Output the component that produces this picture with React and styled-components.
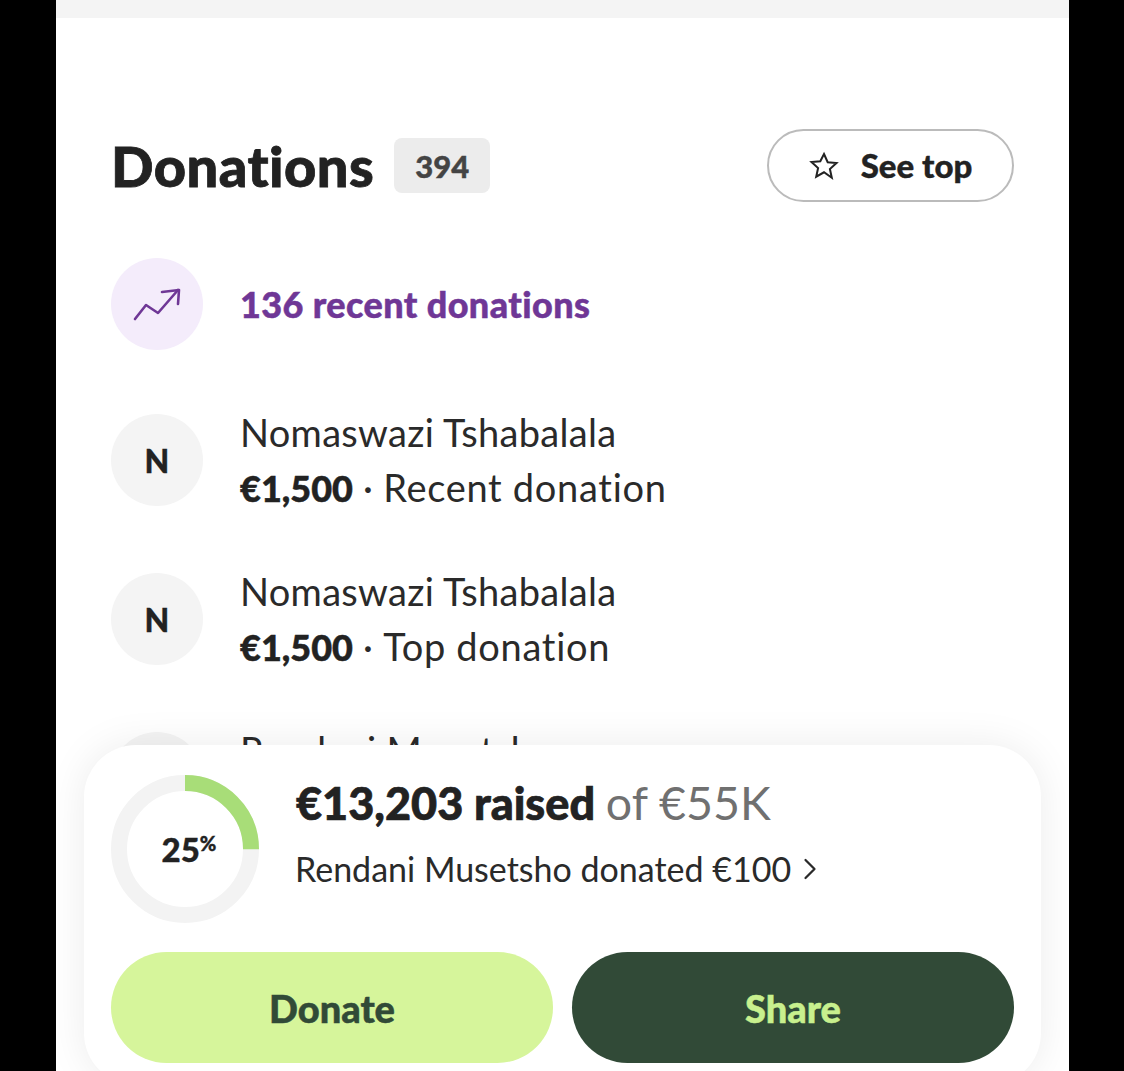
import React from "react";
import styled, { createGlobalStyle } from "styled-components";
import { ChevronRight } from "lucide-react";

const GlobalStyle = createGlobalStyle`
  html, body {
    margin: 0;
    background: #000;
  }
  body {
    font-family: "Lato", "Open Sans", sans-serif;
    font-variant-ligatures: none;
    color: #222;
  }
  button {
    font-variant-ligatures: none;
  }
`;

const Screen = styled.div`
  position: relative;
  width: 1013px;
  height: 1071px;
  margin-left: 56px;
  background: #fff;
  overflow: hidden;
`;

const TopStrip = styled.div`
  height: 18px;
  background: #f4f4f4;
`;

const Content = styled.div`
  padding: 111px 55px 0 55px;
`;

const Header = styled.div`
  display: flex;
  align-items: center;
  justify-content: space-between;
  margin-bottom: 56px;
`;

const TitleGroup = styled.div`
  display: flex;
  align-items: center;
  gap: 20px;
`;

const Title = styled.h2`
  margin: 0;
  font-size: 56px;
  font-weight: 900;
  line-height: 73px;
  letter-spacing: 0.45px;
  color: #222;
  -webkit-text-stroke: 0.8px #222;
`;

const CountBadge = styled.span`
  display: flex;
  align-items: center;
  justify-content: center;
  width: 96px;
  height: 55px;
  border-radius: 8px;
  background: #ececec;
  color: #444;
  font-size: 31px;
  font-weight: 900;
  -webkit-text-stroke: 0.4px #444;
`;

const OutlineButton = styled.button`
  display: flex;
  align-items: center;
  justify-content: center;
  gap: 22px;
  box-sizing: border-box;
  width: 247px;
  height: 73px;
  padding-bottom: 3px;
  border: 2px solid #bbb;
  border-radius: 37px;
  background: #fff;
  color: #222;
  font: 900 33px "Lato", sans-serif;
  -webkit-text-stroke: 0.4px #222;

  svg {
    margin-top: 3px;
  }
`;

const List = styled.div`
  display: flex;
  flex-direction: column;
  gap: 49px;
`;

const Row = styled.div`
  display: flex;
  align-items: center;
  gap: 37px;
  margin-bottom: ${({ $spaced }) => ($spaced ? "6px" : "0")};
`;

const Avatar = styled.div`
  display: flex;
  align-items: center;
  justify-content: center;
  flex: none;
  width: 92px;
  height: 92px;
  border-radius: 50%;
  background: ${({ $tint }) => $tint || "#f4f4f4"};
  font-size: 32px;
  font-weight: 900;
  color: #222;
  -webkit-text-stroke: 0.4px #222;
`;

const RecentLabel = styled.div`
  font-size: 36px;
  font-weight: 900;
  letter-spacing: 0.4px;
  color: #6f3796;
  -webkit-text-stroke: 0.5px #6f3796;
`;

const DonorText = styled.div`
  font-size: 38px;
  line-height: 55px;
  letter-spacing: 0.3px;
  color: #2a2a2a;
`;

const Amount = styled.strong`
  font-size: 36px;
  line-height: 1;
  font-weight: 900;
  letter-spacing: 0;
  color: #222;
  -webkit-text-stroke: 0.5px #222;
`;

const Note = styled.span`
  letter-spacing: 0.7px;
`;

const SummaryCard = styled.div`
  position: absolute;
  left: 28px;
  top: 745px;
  box-sizing: border-box;
  width: 957px;
  height: 340px;
  padding: 30px 27px;
  border-radius: 52px;
  background: #fff;
  box-shadow: 0 0 40px rgba(0, 0, 0, 0.08);
`;

const Progress = styled.div`
  display: flex;
  gap: 38px;
  height: 177px;
`;

const Ring = styled.div`
  position: relative;
  flex: none;
  width: 148px;
  height: 148px;
`;

const RingLabel = styled.div`
  position: absolute;
  inset: 0 0 0 8px;
  display: flex;
  align-items: center;
  justify-content: center;
  font-size: 33px;
  font-weight: 900;
  color: #222;
  -webkit-text-stroke: 0.4px #222;

  sup {
    font-size: 20px;
    line-height: 1;
    align-self: flex-start;
    margin-top: 58px;
  }
`;

const Raised = styled.div`
  margin-left: -1px;
  font-size: 45px;
  line-height: 56px;
  font-weight: 900;
  color: #222;
  -webkit-text-stroke: 0.7px #222;
`;

const Goal = styled.span`
  font-size: 46.5px;
  line-height: 1;
  font-weight: 400;
  color: #707070;
  -webkit-text-stroke: 0;
`;

const Latest = styled.div`
  display: flex;
  align-items: center;
  gap: 1px;
  margin-top: 18px;
  margin-left: -2px;
  font-size: 34px;
  line-height: 40px;
  color: #2a2a2a;
`;

const Actions = styled.div`
  display: grid;
  grid-template-columns: 442px 442px;
  gap: 19px;
`;

const ActionButton = styled.button`
  height: 111px;
  border: 0;
  border-radius: 56px;
  background: ${({ $dark }) => ($dark ? "#314a37" : "#d6f59b")};
  color: ${({ $dark }) => ($dark ? "#c8f08e" : "#314a37")};
  font: 900 38px "Lato", sans-serif;
  -webkit-text-stroke: 0.5px ${({ $dark }) => ($dark ? "#c8f08e" : "#314a37")};
`;

const TrendIcon = () => (
  <svg width="52" height="40" viewBox="0 0 52 40" fill="none" stroke="#6f3796" strokeWidth="2.6" strokeLinecap="round" strokeLinejoin="round">
    <path d="M4 35 15 21l12 8L47 6" />
    <path d="M31 8l17-2-1 14" />
  </svg>
);

const StarIcon = () => (
  <svg width="30" height="30" viewBox="0 0 30 30" fill="none" stroke="#222" strokeWidth="2" strokeLinejoin="miter">
    <path d="M15 3l3.7 8.2 8.8.9-6.6 5.9 1.9 8.7L15 21.3l-7.8 4.4 1.9-8.7-6.6-5.9 8.8-.9z" />
  </svg>
);

const ProgressRing = ({ percent }) => {
  const radius = 66;
  const circumference = 2 * Math.PI * radius;
  return (
    <svg width="148" height="148" viewBox="0 0 148 148" fill="none" strokeWidth="16">
      <circle cx="74" cy="74" r={radius} stroke="#f3f3f3" />
      <circle
        cx="74"
        cy="74"
        r={radius}
        stroke="#a8dd78"
        strokeDasharray={`${(circumference * percent) / 100} ${circumference}`}
        transform="rotate(-90 74 74)"
      />
    </svg>
  );
};

const donors = [
  { id: 1, initial: "N", name: "Nomaswazi Tshabalala", amount: "€1,500", note: "Recent donation" },
  { id: 2, initial: "N", name: "Nomaswazi Tshabalala", amount: "€1,500", note: "Top donation" },
  { id: 3, initial: "R", name: "Rendani Musetsho", amount: "€100", note: "First donation" },
];

const App = () => {
  return (
    <Screen>
      <GlobalStyle />
      <TopStrip />
      <Content>
        <Header>
          <TitleGroup>
            <Title>Donations</Title>
            <CountBadge>394</CountBadge>
          </TitleGroup>
          <OutlineButton>
            <StarIcon />
            See top
          </OutlineButton>
        </Header>
        <List>
          <Row $spaced>
            <Avatar $tint="#f4ecfb">
              <TrendIcon />
            </Avatar>
            <RecentLabel>136 recent donations</RecentLabel>
          </Row>
          {donors.map((donor) => (
            <Row key={donor.id}>
              <Avatar>{donor.initial}</Avatar>
              <DonorText>
                {donor.name}
                <br />
                <Amount>{donor.amount}</Amount> · <Note>{donor.note}</Note>
              </DonorText>
            </Row>
          ))}
        </List>
      </Content>
      <SummaryCard>
        <Progress>
          <Ring>
            <ProgressRing percent={25} />
            <RingLabel>
              25<sup>%</sup>
            </RingLabel>
          </Ring>
          <div>
            <Raised>
              €13,203 raised <Goal>of €55K</Goal>
            </Raised>
            <Latest>
              Rendani Musetsho donated €100
              <ChevronRight size={36} strokeWidth={1.5} />
            </Latest>
          </div>
        </Progress>
        <Actions>
          <ActionButton>Donate</ActionButton>
          <ActionButton $dark>Share</ActionButton>
        </Actions>
      </SummaryCard>
    </Screen>
  );
};

export default App;
